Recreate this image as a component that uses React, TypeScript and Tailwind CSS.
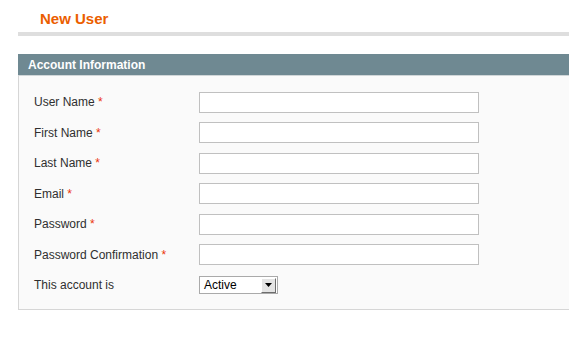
import React from 'react';

const fields = [
  { label: 'User Name', required: true },
  { label: 'First Name', required: true },
  { label: 'Last Name', required: true },
  { label: 'Email', required: true },
  { label: 'Password', required: true },
  { label: 'Password Confirmation', required: true },
];

function App() {
  return (
    <div className="min-h-screen bg-white pl-[18px] font-['Liberation_Sans',Arial,sans-serif]">
      {/* Page title */}
      <div className="pt-[10px] pb-[5px] pl-[22px]">
        <h1 className="text-[15px] leading-[17px] font-bold text-[#eb5e00]">New User</h1>
      </div>
      <div className="h-[4px] bg-[#dedede]"></div>

      {/* Fieldset */}
      <div className="mt-[18px]">
        <div className="h-[22px] bg-[#6f8992] border-b border-[#d0d6d8] flex items-center pl-[10px]">
          <h2 className="text-[12px] font-bold text-white">Account Information</h2>
        </div>
        <div className="bg-[#fafafa] border-l border-b border-[#d6d6d6] pl-[15px] pt-[11px] pb-[8px]">
          {fields.map((field) => (
            <div key={field.label} className="flex items-center h-[30.5px]">
              <label className="w-[165px] text-[12px] text-[#2f2f2f]">
                {field.label}
                {field.required && <span className="text-[#eb340a]"> *</span>}
              </label>
              <input
                type="text"
                className="w-[280px] h-[21px] bg-white border border-[#c0c0c0] outline-none"
              />
            </div>
          ))}
          <div className="flex items-center h-[30.5px]">
            <label className="w-[165px] text-[12px] text-[#2f2f2f]">This account is</label>
            <div className="w-[79px] h-[18px] bg-white border border-[#aaaaaa] flex items-center">
              <span className="flex-1 pl-[4px] text-[12px] text-black leading-none">Active</span>
              <div className="w-[15px] h-[15px] mr-px bg-[#e4e4e4] border-t border-l border-t-white border-l-white border-r border-b border-r-[#6d6d6d] border-b-[#6d6d6d] flex items-center justify-center">
                <svg width="7" height="4" viewBox="0 0 7 4">
                  <polygon points="0,0 7,0 3.5,4" fill="#000" />
                </svg>
              </div>
            </div>
          </div>
        </div>
      </div>
    </div>
  );
}

export default App;
